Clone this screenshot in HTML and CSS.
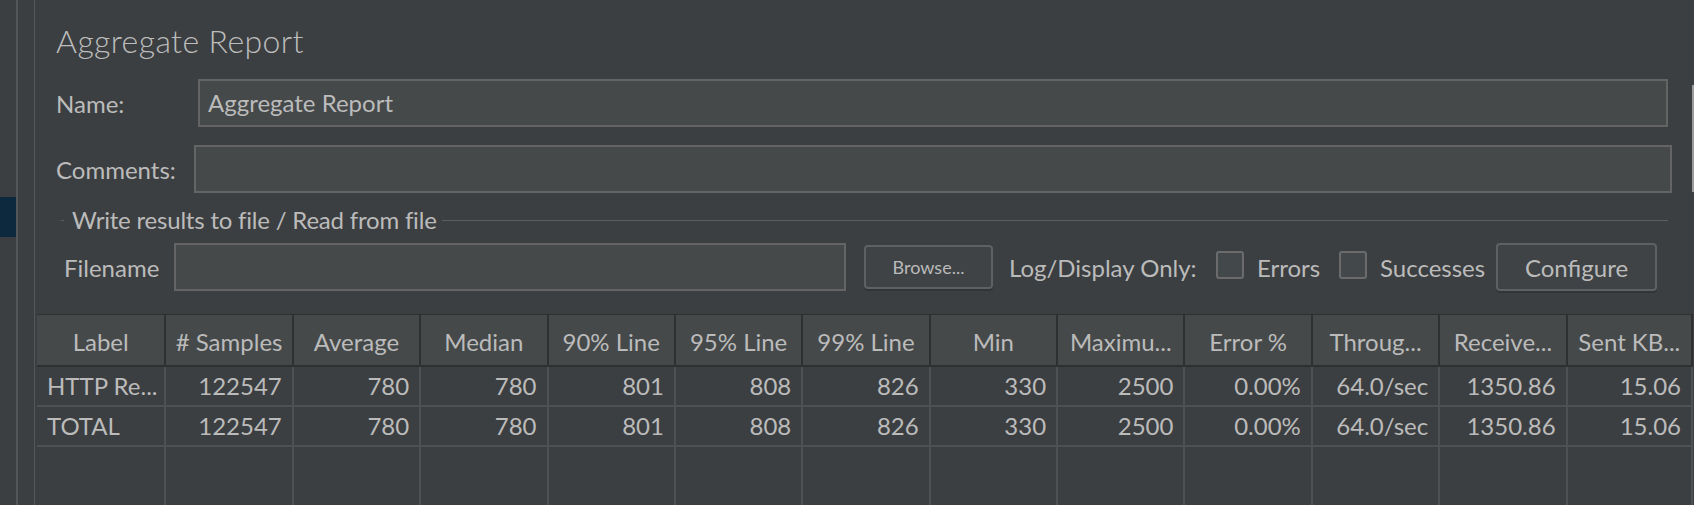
FILE: index.html
```html
<!DOCTYPE html>
<html lang="en">
<head>
<meta charset="utf-8">
<title>Aggregate Report</title>
<link rel="stylesheet" href="styles.css">
</head>
<body>
<div class="app">
  <div class="tree"><div class="tree-sel"></div></div>
  <div class="gutter"></div>
  <main class="panel">
    <h1 class="title">Aggregate Report</h1>

    <div class="row row-name">
      <label class="lbl lbl-name">Name:</label>
      <div class="field field-name">Aggregate Report</div>
    </div>

    <div class="row row-comments">
      <label class="lbl lbl-comments">Comments:</label>
      <div class="field field-comments"></div>
    </div>

    <div class="sep">
      <span class="sep-dash"></span>
      <span class="sep-text">Write results to file / Read from file</span>
      <span class="sep-line"></span>
    </div>

    <div class="row row-file">
      <label class="lbl lbl-file">Filename</label>
      <div class="field field-file"></div>
      <button class="btn btn-browse">Browse...</button>
      <span class="log-lbl">Log/Display Only:</span>
      <span class="check check-errors"><span class="box"></span><span class="check-text">Errors</span></span>
      <span class="check check-succ"><span class="box"></span><span class="check-text">Successes</span></span>
      <button class="btn btn-config">Configure</button>
    </div>

    <div class="table">
      <div class="trow thead">
        <div class="cell">Label</div>
        <div class="cell"># Samples</div>
        <div class="cell">Average</div>
        <div class="cell">Median</div>
        <div class="cell">90% Line</div>
        <div class="cell">95% Line</div>
        <div class="cell">99% Line</div>
        <div class="cell">Min</div>
        <div class="cell">Maximu...</div>
        <div class="cell">Error %</div>
        <div class="cell">Throug...</div>
        <div class="cell">Receive...</div>
        <div class="cell">Sent KB...</div>
      </div>
      <div class="trow tbody">
        <div class="cell txt">HTTP Re...</div>
        <div class="cell">122547</div>
        <div class="cell">780</div>
        <div class="cell">780</div>
        <div class="cell">801</div>
        <div class="cell">808</div>
        <div class="cell">826</div>
        <div class="cell">330</div>
        <div class="cell">2500</div>
        <div class="cell">0.00%</div>
        <div class="cell">64.0/sec</div>
        <div class="cell">1350.86</div>
        <div class="cell">15.06</div>
      </div>
      <div class="trow tbody">
        <div class="cell txt">TOTAL</div>
        <div class="cell">122547</div>
        <div class="cell">780</div>
        <div class="cell">780</div>
        <div class="cell">801</div>
        <div class="cell">808</div>
        <div class="cell">826</div>
        <div class="cell">330</div>
        <div class="cell">2500</div>
        <div class="cell">0.00%</div>
        <div class="cell">64.0/sec</div>
        <div class="cell">1350.86</div>
        <div class="cell">15.06</div>
      </div>
      <div class="trow tfill">
        <div class="cell"></div><div class="cell"></div><div class="cell"></div><div class="cell"></div>
        <div class="cell"></div><div class="cell"></div><div class="cell"></div><div class="cell"></div>
        <div class="cell"></div><div class="cell"></div><div class="cell"></div><div class="cell"></div>
        <div class="cell"></div>
      </div>
    </div>
  </main>
  <div class="scroll"><div class="thumb"></div></div>
</div>
</body>
</html>
```
FILE: styles.css
```css
* { box-sizing: border-box; }

html, body {
  margin: 0;
  padding: 0;
  background: #3c3f41;
}

body {
  font-family: "Lato", "Liberation Sans", sans-serif;
  font-size: 24px;
  color: #bbbbbb;
  overflow: hidden;
}

.app {
  display: flex;
  width: 1694px;
  height: 505px;
  overflow: hidden;
}

/* left tree remnant */
.tree {
  width: 18px;
  border-right: 2px solid #545658;
  padding-top: 197px;
}
.tree-sel {
  height: 40px;
  background: #0d293e;
}
.gutter {
  width: 17px;
  border-right: 1px solid #545658;
}

/* main panel */
.panel {
  width: 1657px;
  display: flex;
  flex-direction: column;
  padding-top: 22px;
  padding-left: 21px;
}

.title {
  margin: 0;
  font-size: 32px;
  font-weight: 300;
  line-height: 38px;
  color: #bdbdbd;
  letter-spacing: 0.4px;
}

.row {
  display: flex;
  align-items: center;
  height: 48px;
}
.row-name { margin-top: 19px; }
.row-comments { margin-top: 18px; }

.lbl { flex: none; white-space: nowrap; }
.lbl-name { width: 142px; }
.lbl-comments { width: 138px; }
.lbl-file { width: 110px; margin-left: 8px; }

.field {
  height: 48px;
  background: #45494a;
  border: 2px solid #646464;
  padding: 0 8px;
  line-height: 44px;
  white-space: nowrap;
}
.field-name { flex: 1; margin-right: 24px; }
.field-comments { flex: 1; margin-right: 20px; }
.field-file { width: 672px; flex: none; }

/* titled separator */
.sep {
  display: flex;
  align-items: center;
  height: 30px;
  margin-top: 12px;
  line-height: 30px;
}
.sep-dash {
  width: 3px;
  height: 1px;
  margin-left: 5px;
  margin-right: 8px;
  background: #5b5e60;
}
.sep-text { white-space: nowrap; letter-spacing: -0.2px; }
.sep-line {
  flex: 1;
  height: 1px;
  margin-left: 5px;
  margin-right: 24px;
  background: #5b5e60;
}

/* file row */
.row-file { margin-top: 8px; }

.btn {
  flex: none;
  font-family: inherit;
  color: #bbbbbb;
  background: #3f4345;
  border: 2px solid #5e6163;
  border-radius: 4px;
  box-shadow: 0 2px 0 #323436;
  padding: 0;
}
.btn-browse {
  width: 129px;
  height: 44px;
  margin-left: 18px;
  font-size: 18px;
}
.btn-config {
  width: 161px;
  height: 48px;
  font-size: 24px;
}

.log-lbl {
  flex: none;
  width: 209px;
  margin-left: 14px;
  padding-left: 2px;
  white-space: nowrap;
}

.check {
  flex: none;
  display: flex;
  align-items: center;
  gap: 13px;
}
.check-errors { width: 123px; }
.check-succ { width: 157px; }
.box {
  width: 28px;
  height: 28px;
  margin-bottom: 4px;
  background: #43494a;
  border: 2px solid #6b6b6b;
  border-radius: 3px;
}
.check-text { white-space: nowrap; }

/* table */
.table {
  flex: 1;
  display: flex;
  flex-direction: column;
  width: 1656px;
  margin-top: 23px;
  margin-left: -19px;
  border-top: 1px solid #2e3032;
}

.trow {
  display: grid;
  grid-template-columns: repeat(13, 1fr);
}

.cell {
  border-left: 2px solid #4e5153;
  white-space: nowrap;
  overflow: hidden;
}
.cell:first-child { border-left: none; }
.cell:last-child { border-right: 2px solid #4e5153; }

.thead {
  height: 52px;
  background: #45494a;
  border-bottom: 2px solid #2e3032;
}
.thead .cell {
  border-color: #2e3032;
  text-align: center;
  line-height: 46px;
  padding-top: 4px;
}

.tbody {
  height: 40px;
  border-bottom: 2px solid #4e5153;
}
.tbody .cell {
  line-height: 38px;
  text-align: right;
  padding-right: 10px;
}
.tbody .cell.txt {
  text-align: left;
  padding-left: 10px;
  padding-right: 0;
}

.tfill { flex: 1; }

/* right edge scrollbar */
.scroll {
  width: 2px;
  padding-top: 85px;
}
.thumb {
  height: 107px;
  background: #9c9c9c;
}
```
